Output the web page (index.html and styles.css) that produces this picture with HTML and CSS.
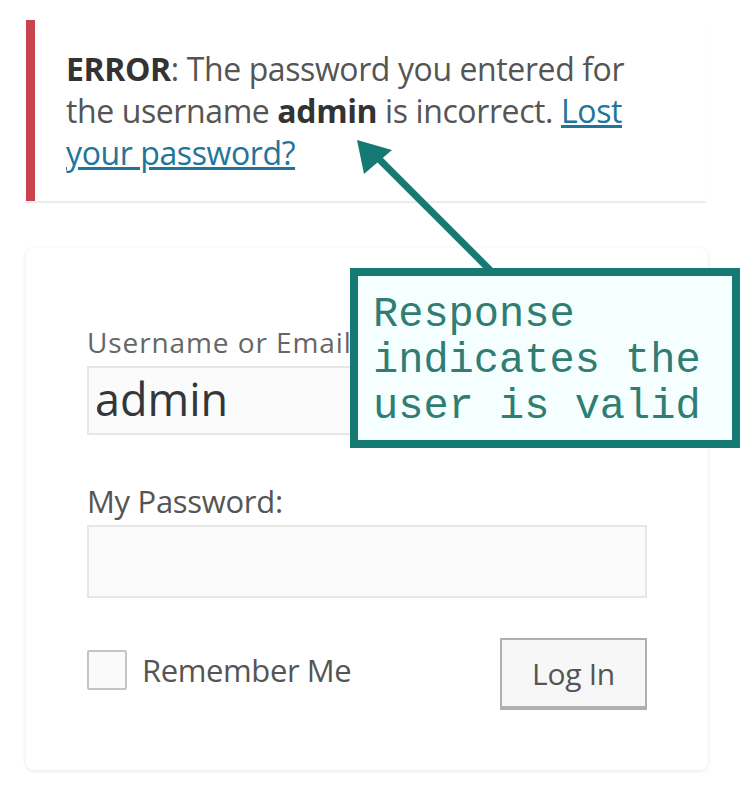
FILE: index.html
```html
<!DOCTYPE html>
<html>
<head>
<meta charset="utf-8">
<link rel="stylesheet" href="styles.css">
</head>
<body>
<div class="page">
  <div class="notice">
    <p><strong>ERROR</strong>: The password you entered for the username <strong>admin</strong> is incorrect. <a href="#">Lost your password?</a></p>
  </div>
  <form class="login">
    <label class="lbl lbl-user">Username or Email</label>
    <div class="input input-user">admin</div>
    <label class="lbl lbl-pass">My Password:</label>
    <div class="input input-pass"></div>
    <div class="actions">
      <div class="remember"><span class="check"></span><span>Remember Me</span></div>
      <div class="btn">Log In</div>
    </div>
  </form>
  <svg class="arrow" width="150" height="140" viewBox="0 0 150 140">
    <line x1="138" y1="130" x2="18" y2="10" stroke="#157a74" stroke-width="7"/>
    <polygon points="5,0 40,10 12,34" fill="#157a74"/>
  </svg>
  <div class="callout">Response<br>indicates the<br>user is valid</div>
</div>
</body>
</html>
```

FILE: styles.css
```css
html, body { margin: 0; padding: 0; background: #fff; }
.page {
  position: relative;
  width: 750px;
  height: 806px;
  padding: 20px 0 0 26px;
  box-sizing: border-box;
  font-family: "Open Sans", "Noto Sans", sans-serif;
}
.notice {
  width: 680px;
  height: 181px;
  box-sizing: border-box;
  border-left: 9px solid #c9444e;
  background: #fff;
  box-shadow: 0 2px 1px rgba(0,0,0,0.07);
  padding: 28px 40px 0 31px;
}
.notice p {
  margin: 0;
  font-size: 32px;
  line-height: 42px;
  color: #555;
  letter-spacing: -0.4px;
}
.notice strong { font-weight: 700; color: #333; }
.notice a { color: #21759b; text-decoration: underline; }
.login {
  margin-top: 47px;
  width: 682px;
  height: 522px;
  box-sizing: border-box;
  border-radius: 8px;
  box-shadow: 0 1px 4px rgba(0,0,0,0.10);
  padding: 78px 61px 0 61px;
  display: flex;
  flex-direction: column;
}
.lbl { display: block; color: #5b5f63; white-space: nowrap; }
.lbl-user { font-size: 28px; line-height: 32px; letter-spacing: 0.9px; font-weight: 500; color: #666; }
.lbl-pass { font-size: 31px; line-height: 36px; margin-top: 48px; color: #555; letter-spacing: -0.3px; }
.input {
  box-sizing: border-box;
  border: 2px solid #e6e6e6;
  background: #fbfbfb;
  width: 560px;
}
.input-user {
  margin-top: 8px;
  height: 69px;
  font-size: 45px;
  line-height: 62px;
  padding-left: 6px;
  color: #32373c;
}
.input-pass { margin-top: 6px; height: 73px; }
.actions {
  margin-top: 40px;
  display: flex;
  justify-content: space-between;
  align-items: flex-start;
}
.remember {
  display: flex;
  align-items: center;
  gap: 15px;
  margin-top: 11px;
  font-size: 31px;
  color: #555;
  letter-spacing: -0.4px;
}
.check {
  width: 40px;
  height: 40px;
  box-sizing: border-box;
  border: 2px solid #c4c4c4;
  border-radius: 2px;
  background: #fafafa;
}
.btn {
  width: 147px;
  height: 72px;
  box-sizing: border-box;
  border: 2px solid #b0b0b0;
  border-bottom-width: 4px;
  background: #f7f7f7;
  color: #555;
  font-size: 30px;
  letter-spacing: -0.3px;
  display: flex;
  align-items: center;
  justify-content: center;
}
.arrow {
  position: absolute;
  left: 352px;
  top: 140px;
}
.callout {
  position: absolute;
  left: 350px;
  top: 268px;
  width: 390px;
  height: 180px;
  box-sizing: border-box;
  border: 8px solid #157a74;
  background: #f6ffff;
  padding: 16px 0 0 15px;
  font-family: "Liberation Mono", "DejaVu Sans Mono", monospace;
  font-size: 42px;
  line-height: 46px;
  color: #2f7d73;
  white-space: nowrap;
}
```
